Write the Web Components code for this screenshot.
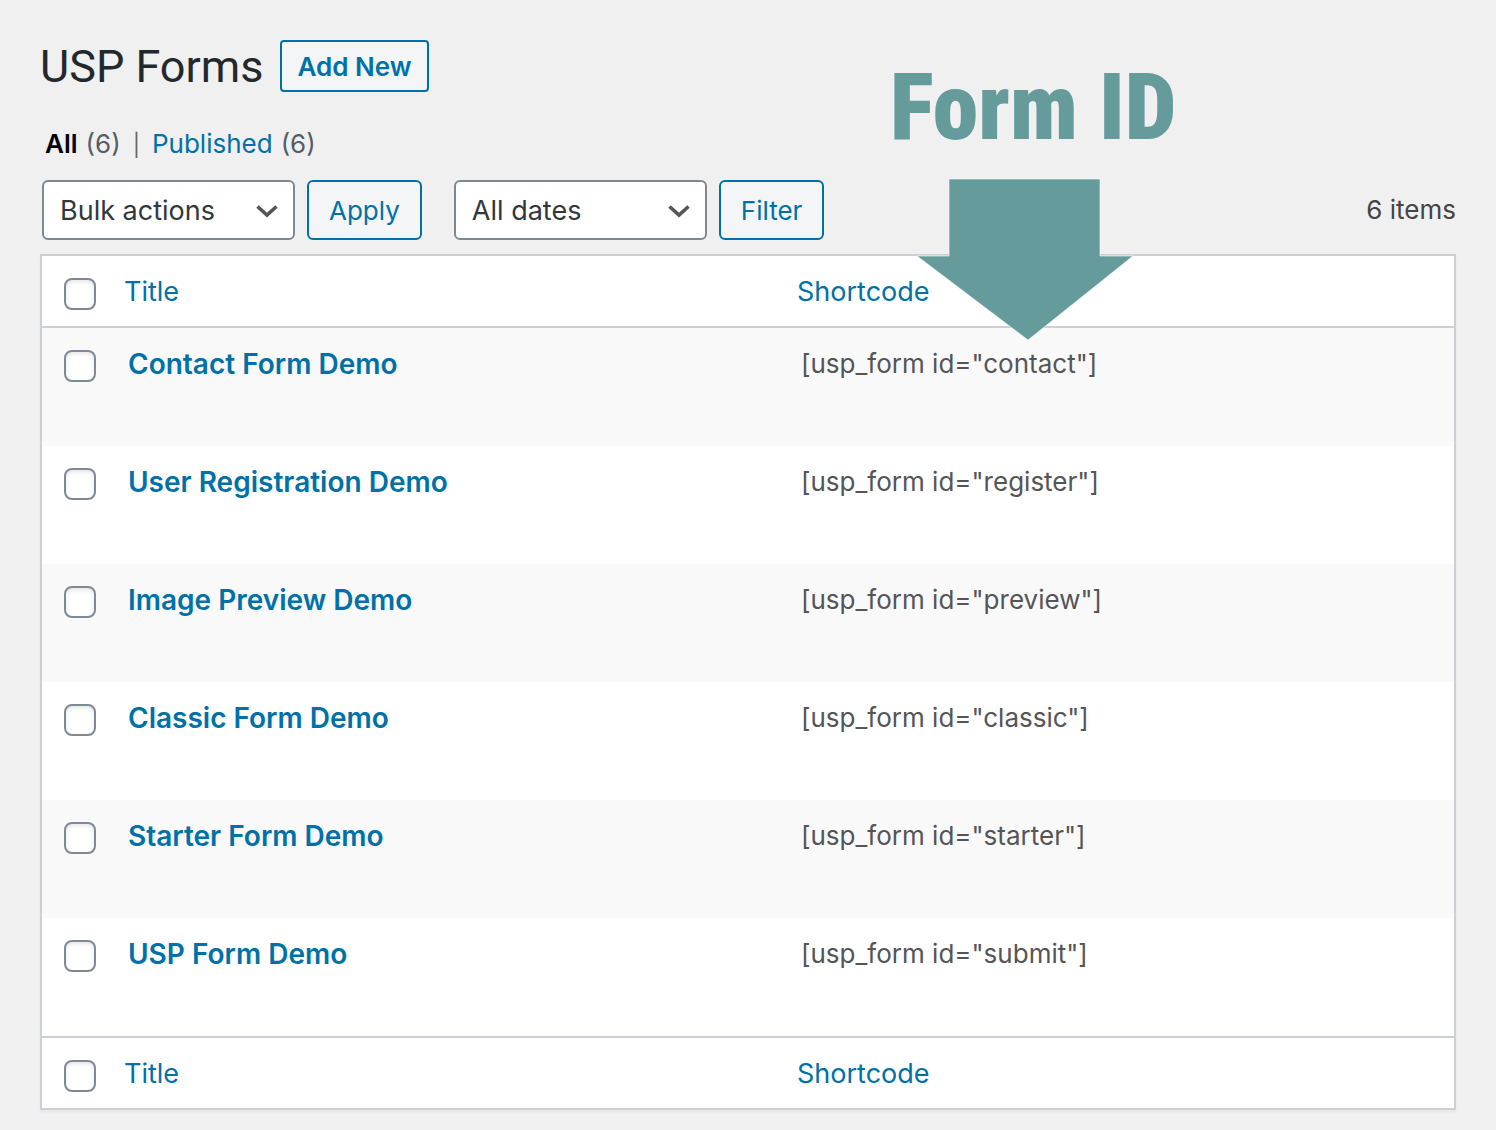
<!DOCTYPE html>
<html lang="en">
<head>
<meta charset="utf-8">
<title>USP Forms</title>
<style>
  body {
    margin: 0;
    background: #f0f0f0;
    color: #3c434a;
    font: 26px/40px Inter, "Liberation Sans", sans-serif;
    --blue: #0071a8;
    --line: #ccd0d4;
    --control: #7e8993;
    --teal: #659b9a;
  }
</style>
</head>
<body>
<forms-page>
  <span slot="heading">USP Forms</span>
  <action-button slot="add" kind="page">Add New</action-button>
  <status-links slot="status"></status-links>
  <list-toolbar slot="toolbar"></list-toolbar>
  <forms-table slot="table"></forms-table>
  <arrow-callout slot="callout">Form ID</arrow-callout>
</forms-page>

<script>
class BaseElement extends HTMLElement {
  connectedCallback() {
    if (this.shadowRoot) return;
    this.attachShadow({ mode: "open" }).innerHTML =
      "<style>*{box-sizing:border-box}:host{display:block}</style>" + this.render();
  }
}

customElements.define("forms-page", class extends BaseElement {
  render() {
    return `<style>
      :host { position: relative; padding: 40px 40px 20px; background: #f0f0f0; }
      header { display: flex; align-items: center; gap: 17px; height: 52px; }
      h1 { margin: 0; padding-top: 2px; font: 400 45px/52px Roboto, sans-serif; color: #23282d; }
      .status { margin-top: 32px; padding-left: 5px; }
      .toolbar { margin: 16px 0 14px; padding-left: 2px; }
    </style>
    <header><h1><slot name="heading"></slot></h1><slot name="add"></slot></header>
    <div class="status"><slot name="status"></slot></div>
    <div class="toolbar"><slot name="toolbar"></slot></div>
    <slot name="table"></slot>
    <slot name="callout"></slot>`;
  }
});

customElements.define("action-button", class extends BaseElement {
  render() {
    return `<style>
      :host { flex: none; }
      button {
        display: block; height: 60px; padding: 2px 20px 0; border: 2px solid var(--blue);
        border-radius: 6px; background: #f3f5f6; color: var(--blue);
        font: inherit; white-space: nowrap; cursor: pointer;
      }
      :host([kind="page"]) button { height: 52px; padding: 2px 15px 0; border-radius: 4px; font-weight: 600; }
    </style>
    <button type="button"><slot></slot></button>`;
  }
});

customElements.define("status-links", class extends BaseElement {
  render() {
    return `<style>
      nav { display: flex; align-items: center; gap: 8px; height: 40px; color: #555d66; }
      a { color: var(--blue); text-decoration: none; }
      a.current { color: #000; font-weight: 600; }
      .bar { padding: 2px 4px 0; color: #666; font-size: 22px; }
    </style>
    <nav aria-label="Status">
      <a class="current" href="#all">All</a><span>(6)</span><span class="bar">|</span>
      <a href="#published">Published</a><span>(6)</span>
    </nav>`;
  }
});

customElements.define("drop-down", class extends BaseElement {
  render() {
    const label = this.getAttribute("label");
    return `<style>
      :host { flex: none; width: 253px; }
      .box { display: grid; align-items: center; }
      select, svg { grid-area: 1 / 1; }
      select {
        appearance: none; width: 100%; height: 60px; margin: 0; padding: 2px 48px 0 16px;
        border: 2px solid var(--control); border-radius: 6px; background: #fff;
        color: #32373c; font: inherit; font-size: 27px;
      }
      svg { justify-self: end; width: 22px; height: 14px; margin: 2px 17px 0 0; pointer-events: none; z-index: 1; }
    </style>
    <div class="box">
      <select aria-label="${label}"><option>${this.textContent}</option></select>
      <svg viewBox="0 0 22 14"><path d="M1.500 2.500l9.500 8.500 9.500-8.500" fill="none" stroke="#555" stroke-width="3.600"/></svg>
    </div>`;
  }
});

customElements.define("list-toolbar", class extends BaseElement {
  render() {
    return `<style>
      :host, .group { display: flex; align-items: center; }
      :host { gap: 32px; }
      .group { gap: 12px; }
      .count { margin-left: auto; color: #444; }
    </style>
    <div class="group"><drop-down label="Select bulk action">Bulk actions</drop-down><action-button>Apply</action-button></div>
    <div class="group"><drop-down label="Filter by date">All dates</drop-down><action-button>Filter</action-button></div>
    <span class="count">6 items</span>`;
  }
});

customElements.define("tick-box", class extends BaseElement {
  render() {
    return `<style>
      input {
        appearance: none; display: block; width: 32px; height: 32px; margin: 0;
        border: 2px solid var(--control); border-radius: 8px; background: #fff;
        box-shadow: inset 0 2px 4px rgba(0,0,0,.1);
      }
    </style>
    <input type="checkbox" aria-label="${this.getAttribute("label")}">`;
  }
});

customElements.define("forms-table", class extends BaseElement {
  render() {
    const forms = [
      ["Contact Form Demo", "contact"],
      ["User Registration Demo", "register"],
      ["Image Preview Demo", "preview"],
      ["Classic Form Demo", "classic"],
      ["Starter Form Demo", "starter"],
      ["USP Form Demo", "submit"]
    ];
    const heads = `<tr><td><tick-box label="Select all"></tick-box></td>
      <th scope="col"><a href="#title">Title</a></th>
      <th scope="col"><a href="#shortcode">Shortcode</a></th></tr>`;
    return `<style>
      :host { border: 2px solid var(--line); background: #fff; box-shadow: 0 2px 2px rgba(0,0,0,.04); }
      table { width: 100%; table-layout: fixed; border-collapse: separate; border-spacing: 0; }
      .check { width: 66px; }
      td, th { padding: 16px 20px; text-align: left; vertical-align: top; font-weight: 400; }
      th { padding: 16px 16px 14px; font-size: 27px; }
      td:first-child { padding: 22px 0 0 22px; }
      thead tr, tfoot tr { height: 72px; }
      tbody tr { height: 118px; }
      thead td, thead th { border-bottom: 2px solid var(--line); }
      tfoot td, tfoot th { border-top: 2px solid var(--line); }
      tbody tr:nth-child(odd) { background: #f9f9f9; }
      a { color: var(--blue); text-decoration: none; }
      .name { font-size: 28px; font-weight: 600; }
      .code { color: #555; }
    </style>
    <table>
      <colgroup><col class="check"><col><col></colgroup>
      <thead>${heads}</thead>
      <tbody>${forms.map(([name, id]) => `<tr>
        <td><tick-box label="Select ${name}"></tick-box></td>
        <td class="name"><a href="#${id}">${name}</a></td>
        <td class="code">[usp_form id="${id}"]</td></tr>`).join("")}</tbody>
      <tfoot>${heads}</tfoot>
    </table>`;
  }
});

customElements.define("arrow-callout", class extends BaseElement {
  render() {
    return `<style>
      :host { position: absolute; left: 890px; top: 48px; pointer-events: none; color: var(--teal); }
      .text { display: block; font: 900 92px/120px "Roboto Condensed", Roboto, sans-serif; white-space: nowrap; }
      svg { display: block; width: 216px; height: 164px; margin: 10px 0 0 27px; }
    </style>
    <span class="text"><slot></slot></span>
    <svg viewBox="0 0 216 164" aria-hidden="true"><path d="M32 1h151v77h33L111 162 0 78h32z" fill="currentColor" stroke="#fff" stroke-opacity=".6"/></svg>`;
  }
});
</script>
</body>
</html>
